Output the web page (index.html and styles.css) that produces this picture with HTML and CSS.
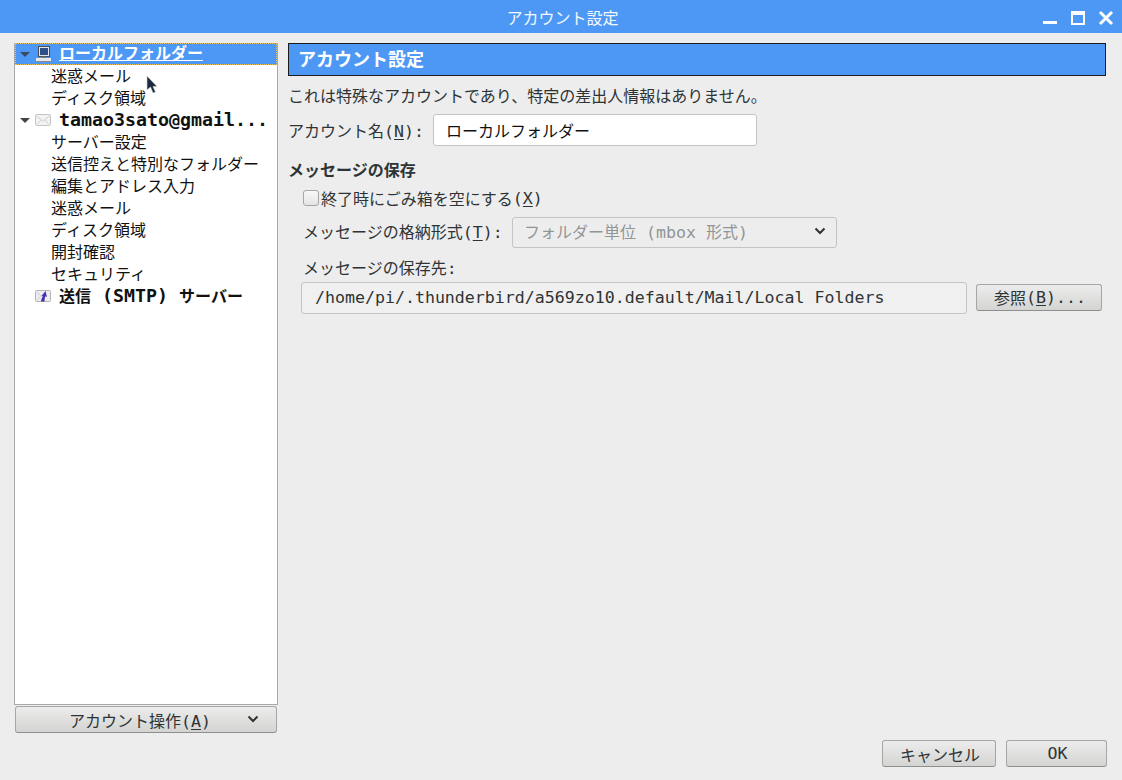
FILE: index.html
```html
<!DOCTYPE html>
<html lang="ja">
<head>
<meta charset="utf-8">
<title>アカウント設定</title>
<link rel="stylesheet" href="styles.css">
</head>
<body>
<div class="window">
  <header class="titlebar">
    <div class="title">アカウント設定</div>
    <div class="winbtns">
      <svg width="16" height="16" viewBox="0 0 16 16"><rect x="1" y="11" width="14" height="3" fill="#fff"/></svg>
      <svg width="16" height="16" viewBox="0 0 16 16"><path fill="#fff" fill-rule="evenodd" d="M1 1h14v14H1zM3 5v8h10V5z"/></svg>
      <svg width="16" height="16" viewBox="0 0 16 16"><path stroke="#fff" stroke-width="3" d="M2 2l12 12M14 2L2 14"/></svg>
    </div>
  </header>
  <div class="body">
    <aside class="side">
      <div class="tree">
        <div class="row selected">
          <span class="tw"></span>
          <svg class="ic" width="16" height="16" viewBox="0 0 16 16"><rect x="3.500" y="0.500" width="11" height="10" fill="#e2e6ea" stroke="#4a4f55"/><rect x="5" y="2" width="8" height="7" fill="#2c5088"/><rect x="1" y="12" width="15" height="3" fill="#e8e8e8"/><rect x="7" y="10.500" width="4" height="1.500" fill="#777"/><rect x="1" y="15" width="15" height="1" fill="#8a8a8a"/></svg>
          <span class="bold ul">ローカルフォルダー</span>
        </div>
        <div class="row child">迷惑メール</div>
        <div class="row child">ディスク領域</div>
        <div class="row">
          <span class="tw dark"></span>
          <svg class="ic" width="16" height="16" viewBox="0 0 16 16"><rect x="0.500" y="2.500" width="15" height="11" rx="1" fill="#f3f3f3" stroke="#c4c4c4"/><path d="M1.500 4l6.500 5 6.500-5M2 12.500l4-4.500M14 12.500L10 8" fill="none" stroke="#cfcfcf"/></svg>
          <span class="bold mono">tamao3sato@gmail...</span>
        </div>
        <div class="row child">サーバー設定</div>
        <div class="row child">送信控えと特別なフォルダー</div>
        <div class="row child">編集とアドレス入力</div>
        <div class="row child">迷惑メール</div>
        <div class="row child">ディスク領域</div>
        <div class="row child">開封確認</div>
        <div class="row child">セキュリティ</div>
        <div class="row smtp">
          <svg class="ic" width="16" height="16" viewBox="0 0 16 16"><rect x="0.500" y="2.500" width="15" height="11" rx="1" fill="#ededf0" stroke="#b4b4b4"/><path d="M1.500 4l5 4M2 12.500l3.500-4" fill="none" stroke="#cfcfd8"/><path d="M6 13.500c.3-2.500 1-4 2-5L6.500 8 10.500 3l1.500 6-1.700-.8c-.6 1.500-.8 3.300-.8 5.300z" fill="#4a2fb0"/></svg>
          <span class="bold">送信<span class="mono"> (SMTP) </span>サーバー</span>
        </div>
      </div>
      <button class="btn actions"><span class="lbl">アカウント操作<span class="lat">(<u>A</u>)</span></span><svg class="chev" width="12" height="8" viewBox="0 0 12 8"><path d="M1.500 1.500L6 6l4.500-4.500" fill="none" stroke="#333" stroke-width="2"/></svg></button>
    </aside>
    <main class="panel">
      <h1 class="heading">アカウント設定</h1>
      <p class="note">これは特殊なアカウントであり、特定の差出人情報はありません。</p>
      <div class="namerow">
        <label>アカウント名<span class="lat">(<u>N</u>):</span></label>
        <div class="input name">ローカルフォルダー</div>
      </div>
      <h2 class="section">メッセージの保存</h2>
      <div class="indent">
        <div class="checkrow"><span class="check"></span>終了時にごみ箱を空にする<span class="lat">(<u>X</u>)</span></div>
        <div class="formatrow">
          <label>メッセージの格納形式<span class="lat">(<u>T</u>):</span></label>
          <div class="select"><span class="disabled">フォルダー単位<span class="lat"> (mbox </span>形式<span class="lat">)</span></span><svg class="chev" width="12" height="8" viewBox="0 0 12 8"><path d="M1.500 1.500L6 6l4.500-4.500" fill="none" stroke="#333" stroke-width="2"/></svg></div>
        </div>
        <div class="pathlabel">メッセージの保存先<span class="lat">:</span></div>
      </div>
      <div class="pathrow">
        <div class="input path"><span class="lat">/home/pi/.thunderbird/a569zo10.default/Mail/Local Folders</span></div>
        <button class="btn browse">参照<span class="lat">(<u>B</u>)...</span></button>
      </div>
    </main>
  </div>
  <footer class="footer">
    <button class="btn cancel">キャンセル</button>
    <button class="btn ok"><span class="lat">OK</span></button>
  </footer>
  <svg class="cursor" width="14" height="20" viewBox="0 0 14 20"><path d="M1 1v14l3.500-3 2.500 6 2.500-1-2.500-5.500H11z" fill="#1c2a3e" stroke="#d8d8d8" stroke-width=".6"/></svg>
</div>
</body>
</html>
```
FILE: styles.css
```css
* { box-sizing: border-box; }
html, body { margin: 0; padding: 0; }
body {
  width: 1122px;
  height: 780px;
  overflow: hidden;
  background: #ededed;
  color: #2e3436;
  font-family: "DejaVu Sans Mono", "Noto Sans CJK JP", monospace;
  font-size: 16px;
}
.lat { font-size: 16.6px; }
.window { position: relative; height: 780px; display: flex; flex-direction: column; }
.titlebar {
  height: 33px;
  flex: none;
  background: #4d98f5;
  color: #fff;
  display: flex;
  align-items: center;
  justify-content: center;
  position: relative;
}
.title { font-size: 16px; color: #f4f8ff; line-height: 33px; padding: 3px 0 0 3px; }
.winbtns { position: absolute; right: 8px; top: 10px; display: flex; gap: 12px; }
.body { flex: 1; display: flex; padding: 10px 16px 0 14px; gap: 10px; min-height: 0; }
.side { width: 264px; flex: none; display: flex; flex-direction: column; }
.tree {
  height: 663px;
  background: #fff;
  border: 1px solid #a9a9a9;
  color: #111;
}
.row { height: 22px; display: flex; align-items: center; white-space: pre; padding-left: 5px; line-height: 20px; }
.row.child { padding-left: 36px; padding-top: 2px; }
.row.smtp { padding-left: 20px; }
.row.selected {
  margin-top: -1px;
  background: #4d98f5;
  color: #fff;
  outline: 1px dotted #e8c060;
  outline-offset: -1px;
}
.tw {
  width: 0; height: 0;
  border-left: 5px solid transparent;
  border-right: 5px solid transparent;
  border-top: 5px solid #3a4a60;
  margin-right: 5px;
}
.tw.dark { border-top-color: #444; }
.ic { flex: none; margin-right: 8px; }
.bold { font-weight: 700; font-size: 16px; }
.mono { font-size: 18.3px; }
.ul { text-decoration: underline; }
.btn {
  font: inherit;
  color: #2e3436;
  background: linear-gradient(#ececec, #d4d4d2);
  border: 1px solid #a6a6a6;
  border-bottom-color: #8f8f8f;
  border-radius: 3px;
  padding: 0;
  height: 27px;
  display: inline-flex;
  align-items: center;
  justify-content: center;
}
.actions { width: 262px; margin: 1px 0 0 1px; position: relative; }
.actions .lbl { margin-right: 12px; }
.actions .chev { position: absolute; right: 17px; top: 8px; }
.panel { flex: 1; min-width: 0; }
.heading {
  margin: 0;
  height: 33px;
  background: #4d98f5;
  border: 1px solid #1c1c1c;
  color: #fff;
  font-size: 18px;
  font-weight: 700;
  padding-left: 9px;
  line-height: 31px;
}
.note { margin: 9px 0 0; height: 24px; line-height: 24px; }
.namerow { display: flex; align-items: center; margin: 5px 0 0; }
.namerow label { width: 145px; }
.input {
  background: #fff;
  border: 1px solid #c4c4c4;
  border-radius: 3px;
  display: flex;
  align-items: center;
}
.name { width: 324px; height: 32px; padding: 0 0 1px 12px; color: #111; }
.section { margin: 13px 0 0; font-size: 16px; font-weight: 700; height: 24px; line-height: 24px; }
.indent { padding-left: 15px; }
.checkrow { display: flex; align-items: center; height: 24px; margin-top: 3px; }
.check {
  width: 16px; height: 16px;
  border: 1px solid #a6a6a6;
  border-radius: 3px;
  background: linear-gradient(#f8f8f8, #e4e4e4);
  margin-right: 2px;
}
.formatrow { display: flex; align-items: center; margin-top: 7px; }
.formatrow label { width: 209px; padding-bottom: 4px; }
.select {
  width: 325px;
  height: 31px;
  border: 1px solid #c4c4c4;
  border-radius: 3px;
  display: flex;
  align-items: center;
  justify-content: space-between;
  padding: 0 10px 3px 11px;
}
.disabled { color: #929595; white-space: pre; }
.pathlabel { margin-top: 9px; height: 24px; line-height: 24px; }
.pathrow { display: flex; align-items: flex-start; margin: 1px 0 0 13px; }
.path { width: 666px; height: 32px; background: #f0f0f0; padding: 0 0 2px 13px; color: #2e3436; }
.browse { width: 126px; height: 27px; margin: 2px 0 0 9px; padding: 0 0 1px 2px; }
.footer { height: 47px; flex: none; display: flex; justify-content: flex-end; gap: 10px; padding: 7px 15px 0 0; }
.cancel { width: 114px; padding-left: 2px; }
.ok { width: 101px; padding-left: 2px; }
.cursor { position: absolute; left: 146px; top: 75px; }
u { text-underline-offset: 2px; }
```
